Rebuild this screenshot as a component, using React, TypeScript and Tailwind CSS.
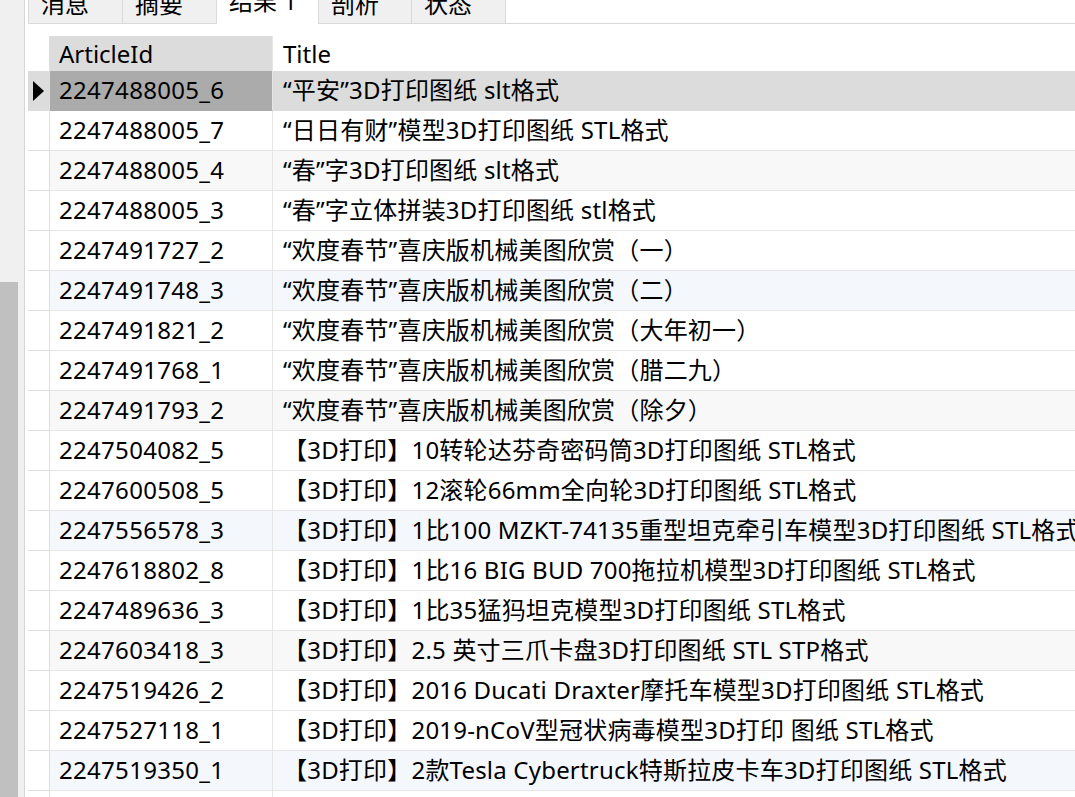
import React from "react";

const rows: [string, string][] = [
  ["2247488005_6", "“平安”3D打印图纸 slt格式"],
  ["2247488005_7", "“日日有财”模型3D打印图纸 STL格式"],
  ["2247488005_4", "“春”字3D打印图纸 slt格式"],
  ["2247488005_3", "“春”字立体拼装3D打印图纸 stl格式"],
  ["2247491727_2", "“欢度春节”喜庆版机械美图欣赏（一）"],
  ["2247491748_3", "“欢度春节”喜庆版机械美图欣赏（二）"],
  ["2247491821_2", "“欢度春节”喜庆版机械美图欣赏（大年初一）"],
  ["2247491768_1", "“欢度春节”喜庆版机械美图欣赏（腊二九）"],
  ["2247491793_2", "“欢度春节”喜庆版机械美图欣赏（除夕）"],
  ["2247504082_5", "【3D打印】10转轮达芬奇密码筒3D打印图纸 STL格式"],
  ["2247600508_5", "【3D打印】12滚轮66mm全向轮3D打印图纸 STL格式"],
  ["2247556578_3", "【3D打印】1比100 MZKT-74135重型坦克牵引车模型3D打印图纸 STL格式"],
  ["2247618802_8", "【3D打印】1比16 BIG BUD 700拖拉机模型3D打印图纸 STL格式"],
  ["2247489636_3", "【3D打印】1比35猛犸坦克模型3D打印图纸 STL格式"],
  ["2247603418_3", "【3D打印】2.5 英寸三爪卡盘3D打印图纸 STL STP格式"],
  ["2247519426_2", "【3D打印】2016 Ducati Draxter摩托车模型3D打印图纸 STL格式"],
  ["2247527118_1", "【3D打印】2019-nCoV型冠状病毒模型3D打印 图纸 STL格式"],
  ["2247519350_1", "【3D打印】2款Tesla Cybertruck特斯拉皮卡车3D打印图纸 STL格式"],
  ["", ""],
];

const tabs = [
  { label: "消息", w: "w-[95px]", active: false },
  { label: "摘要", w: "w-[94px]", active: false },
  { label: "结果 1", w: "w-[102px]", active: true },
  { label: "剖析", w: "w-[93px]", active: false },
  { label: "状态", w: "w-[94px]", active: false },
];

function rowBg(i: number) {
  const n = i + 1;
  if (n % 6 === 3) return "bg-[#f8f8f8]";
  if (n % 6 === 0) return "bg-[#f4f8fd]";
  return "bg-white";
}

export default function App() {
  return (
    <div
      className="flex w-[1075px] h-[797px] overflow-hidden bg-white text-black text-[24px]"
      style={{ fontFamily: '"Noto Sans", "Noto Sans CJK SC", sans-serif' }}
    >
      {/* left strip with scrollbar */}
      <div className="flex flex-col w-[25px] shrink-0 bg-[#f0f0f0] border-r border-[#d6d6d6]">
        <div className="h-[282px] shrink-0" />
        <div className="w-[18px] flex-1 bg-[#c0c0c0]" />
      </div>

      <div className="flex flex-col flex-1 min-w-0">
        {/* tabs */}
        <div className="flex h-[24px] shrink-0 pl-[3px] overflow-hidden">
          {tabs.map((t) => (
            <div
              key={t.label}
              className={`${t.w} shrink-0 h-[24px] overflow-hidden pl-[12px] border-r border-[#d9d9d9] first:border-l ${
                t.active ? "bg-white" : "bg-[#f0f0f0] border-b"
              }`}
            >
              <div className={`leading-[24px] whitespace-nowrap ${t.active ? "-mt-[11px]" : "-mt-[8px]"}`}>
                {t.label}
              </div>
            </div>
          ))}
          <div className="flex-1 border-b border-[#d9d9d9]" />
        </div>

        <div className="h-[12px] shrink-0" />

        {/* grid */}
        <div className="flex flex-col pl-[3px]">
          {/* header */}
          <div className="flex h-[35px] shrink-0">
            <div className="w-[22px] shrink-0 border-r border-[#dedede] bg-white" />
            <div className="w-[223px] shrink-0 bg-[#dcdcdc] border-r border-[#e6e6e6] pl-[9px] leading-[35px] whitespace-nowrap">
              ArticleId
            </div>
            <div className="flex-1 bg-white pl-[10px] leading-[35px] whitespace-nowrap">Title</div>
          </div>

          {rows.map(([id, title], i) => {
            const sel = i === 0;
            const bg = rowBg(i);
            return (
              <div key={id + i} className="flex h-[40px] shrink-0">
                <div
                  className={`w-[22px] shrink-0 border-r border-b border-[#dedede] flex items-center justify-center ${
                    sel ? "bg-[#dcdcdc]" : "bg-white"
                  }`}
                >
                  {sel && (
                    <svg width="11" height="20" viewBox="0 0 11 20" className="ml-[-1px]">
                      <polygon points="0,0 11,10 0,20" fill="#000" />
                    </svg>
                  )}
                </div>
                <div
                  className={`w-[223px] shrink-0 border-r border-b border-[#e6e6e6] pl-[9px] leading-[38px] tracking-[0.3px] whitespace-nowrap overflow-hidden ${
                    sel ? "bg-[#ababab] border-b-[#ababab]" : bg
                  }`}
                >
                  {id}
                </div>
                <div
                  className={`flex-1 min-w-0 border-b border-[#e6e6e6] pl-[10px] leading-[38px] tracking-[0.2px] whitespace-nowrap overflow-hidden ${
                    sel ? "bg-[#dcdcdc] border-b-[#dcdcdc]" : bg
                  }`}
                >
                  {title}
                </div>
              </div>
            );
          })}
        </div>
      </div>
    </div>
  );
}
